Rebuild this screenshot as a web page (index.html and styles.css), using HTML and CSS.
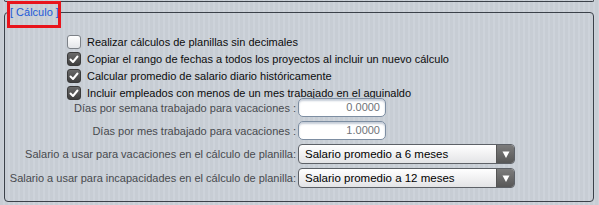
FILE: index.html
```html
<!DOCTYPE html>
<html lang="es">
<head>
<meta charset="utf-8">
<title>Cálculo</title>
<link rel="stylesheet" href="styles.css">
</head>
<body>
<div class="prev"></div>
<fieldset class="group">
  <legend class="group-title">[ Cálculo ]</legend>
  <div class="checks">
    <label class="check"><span class="box"></span><span>Realizar cálculos de planillas sin decimales</span></label>
    <label class="check"><span class="box on"><svg viewBox="0 0 14 14" width="14" height="14"><polyline points="3.5,7.5 6,10 10.5,4.5" fill="none" stroke="#fff" stroke-width="2" stroke-linecap="round" stroke-linejoin="round"/></svg></span><span>Copiar el rango de fechas a todos los proyectos al incluir un nuevo cálculo</span></label>
    <label class="check"><span class="box on"><svg viewBox="0 0 14 14" width="14" height="14"><polyline points="3.5,7.5 6,10 10.5,4.5" fill="none" stroke="#fff" stroke-width="2" stroke-linecap="round" stroke-linejoin="round"/></svg></span><span>Calcular promedio de salario diario históricamente</span></label>
    <label class="check"><span class="box on"><svg viewBox="0 0 14 14" width="14" height="14"><polyline points="3.5,7.5 6,10 10.5,4.5" fill="none" stroke="#fff" stroke-width="2" stroke-linecap="round" stroke-linejoin="round"/></svg></span><span>Incluir empleados con menos de un mes trabajado en el aguinaldo</span></label>
  </div>
  <div class="form">
    <div class="lbl">Días por semana trabajado para vacaciones :</div>
    <div class="input">0.0000</div>
    <div class="lbl">Días por mes trabajado para vacaciones :</div>
    <div class="input">1.0000</div>
    <div class="lbl">Salario a usar para vacaciones en el cálculo de planilla:</div>
    <div class="select"><span class="sel-text">Salario promedio a 6 meses</span><span class="sel-btn"><svg viewBox="0 0 10 10" width="10" height="10"><polygon points="1.5,2.5 8.5,2.5 5,9" fill="#fff"/></svg></span></div>
    <div class="lbl">Salario a usar para incapacidades en el cálculo de planilla:</div>
    <div class="select"><span class="sel-text">Salario promedio a 12 meses</span><span class="sel-btn"><svg viewBox="0 0 10 10" width="10" height="10"><polygon points="1.5,2.5 8.5,2.5 5,9" fill="#fff"/></svg></span></div>
  </div>
</fieldset>
<div class="mark"></div>
</body>
</html>
```

FILE: styles.css
```css
html, body {
  margin: 0;
  padding: 0;
}
body {
  width: 599px;
  height: 205px;
  overflow: hidden;
  position: relative;
  font-family: "Liberation Sans", Arial, sans-serif;
  font-size: 11px;
  color: #111;
  background: repeating-linear-gradient(90deg, #c7cdd4 0 3px, #cdd3da 3px 5px);
}
.prev {
  height: 1px;
  margin: 0 5px 0 4px;
  border: 1px solid #3b4149;
  border-top: none;
  border-radius: 0 0 4px 4px;
}
.group {
  margin: 3px 5px 0 4px;
  padding: 0 0 13px 0;
  min-width: 0;
  border: 1px solid #3b4149;
  border-radius: 4px;
}
.group-title {
  margin-left: 4px;
  padding: 0 1px;
  font-size: 11px;
  line-height: 15px;
  color: #1d5ad8;
}
.checks {
  margin: 15px 0 0 62px;
  display: flex;
  flex-direction: column;
  gap: 3px;
}
.check {
  display: flex;
  align-items: center;
  gap: 6px;
  height: 14px;
  line-height: 14px;
  color: #0c0c0c;
}
.box {
  width: 12px;
  height: 12px;
  border: 1px solid #7d8288;
  border-radius: 3px;
  background: linear-gradient(#ffffff, #e4e6e9);
  display: flex;
  align-items: center;
  justify-content: center;
  flex: none;
}
.box svg {
  display: block;
  margin: -1px;
}
.box.on {
  border-color: #3a3a3a;
  background: linear-gradient(#6a6a6a, #3f3f3f);
}
.form {
  margin-top: -2px;
  display: grid;
  grid-template-columns: 291px 217px;
  column-gap: 2px;
  row-gap: 4px;
  align-items: center;
}
.lbl {
  text-align: right;
  white-space: nowrap;
  color: #474a4e;
}
.input {
  width: 76px;
  height: 17px;
  line-height: 17px;
  padding: 0 5px;
  text-align: right;
  color: #6e7378;
  background: #fff;
  border: 1px solid #7d8ea2;
  border-radius: 5px;
  box-shadow: inset 0 2px 2px rgba(90, 110, 140, 0.35);
}
.select {
  height: 18px;
  display: flex;
  border: 1px solid #5d6167;
  border-radius: 4px;
  overflow: hidden;
  background: linear-gradient(#ffffff, #e3e4e6);
  color: #000;
}
.sel-text {
  flex: 1;
  line-height: 18px;
  padding-left: 6px;
  font-size: 11.5px;
}
.sel-btn {
  width: 17px;
  border-left: 1px solid #555;
  background: linear-gradient(#7c7c7c, #575757);
  display: flex;
  align-items: center;
  justify-content: center;
}
.sel-btn svg {
  display: block;
}
.mark {
  position: absolute;
  left: 7px;
  top: 1px;
  width: 48px;
  height: 21px;
  border: 3px solid #e8141c;
}
```
